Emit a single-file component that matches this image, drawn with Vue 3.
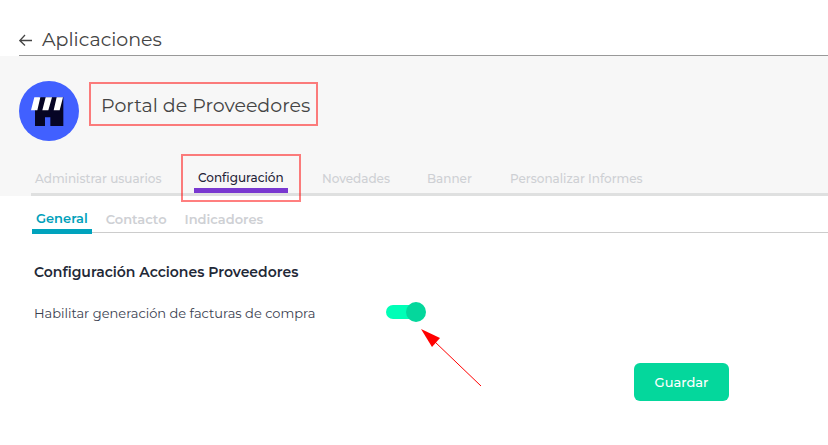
<script setup>
import { ref } from 'vue'

const tabs = ['Administrar usuarios', 'Configuración', 'Novedades', 'Banner', 'Personalizar Informes']
const sections = ['General', 'Contacto', 'Indicadores']
const activeTab = ref('Configuración')
const activeSection = ref('General')
const purchaseInvoices = ref(true)
</script>

<template>
  <div class="page">
    <header class="topbar">
      <a class="back" href="#" aria-label="Volver">
        <svg width="14" height="12" viewBox="0 0 14 12" fill="none" stroke="#444" stroke-width="1.3">
          <path d="M13 6.500H1M6 1L.8 6.500l5.200 5" />
        </svg>
      </a>
      <h1>Aplicaciones</h1>
    </header>

    <section class="hero">
      <div class="app">
        <svg class="logo" width="60" height="60" viewBox="0 0 180 180">
          <circle cx="90" cy="90" r="90" fill="#4160ff" />
          <path d="M60 49H133V135H94V109H78V135H48V88Z" fill="#060525" />
          <path d="M46 49H64L55 88H36ZM80 49H99L88 88H70ZM113 49H132L122 88H104Z" fill="#fff" />
        </svg>
        <h2 class="title">Portal de Proveedores</h2>
      </div>
      <nav class="tabs">
        <a v-for="tab in tabs" :key="tab" href="#" :class="{ active: tab === activeTab }" @click.prevent="activeTab = tab">
          <span>{{ tab }}</span>
        </a>
      </nav>
    </section>

    <nav class="sections">
      <a v-for="s in sections" :key="s" href="#" :class="{ active: s === activeSection }" @click.prevent="activeSection = s">{{ s }}</a>
    </nav>

    <main>
      <h3>Configuración Acciones Proveedores</h3>
      <div class="setting">
        <label for="invoices">Habilitar generación de facturas de compra</label>
        <div class="control">
          <input id="invoices" v-model="purchaseInvoices" type="checkbox" role="switch" />
          <svg class="pointer" width="62" height="60" viewBox="0 0 62 60">
            <path d="M14 13L61 58" stroke="#f00" stroke-width="1" fill="none" />
            <path d="M1 1L20 10L12 19Z" fill="#f00" />
          </svg>
        </div>
      </div>
      <div class="actions"><button type="button">Guardar</button></div>
    </main>
  </div>
</template>

<style>
body {
  margin: 0;
  background: #fff;
}
</style>

<style scoped>
.page {
  font-family: Montserrat, Inter, "Liberation Sans", sans-serif;
  color: #1f2937;
}
h1, h2, h3 {
  margin: 0;
  font-weight: 400;
}
a {
  color: inherit;
  text-decoration: none;
}
.topbar {
  display: flex;
  align-items: center;
  gap: 9px;
  box-sizing: border-box;
  height: 56px;
  margin-left: 19px;
  padding-top: 24px;
  border-bottom: 1px solid #999;
  color: #444;
}
.back {
  display: flex;
}
h1, h2 {
  font-size: 19px;
  line-height: 24px;
}
.hero {
  padding-top: 25px;
  background: #f7f7f7;
}
.app {
  display: flex;
  align-items: flex-start;
  gap: 10px;
  padding-left: 19px;
}
.title {
  margin-top: 1px;
  padding: 10px 6px 6px 10px;
  border: 2px solid rgba(255, 0, 0, 0.5);
  color: #444;
}
.tabs {
  display: grid;
  grid-template-columns: 163px 124px 105px 83px 1fr;
  height: 52px;
  margin-left: 31px;
  padding-left: 4px;
  border-bottom: 3px solid #dfe0e0;
  color: #ced0d4;
  font-size: 12px;
  font-weight: 500;
  line-height: 16px;
  white-space: nowrap;
}
.tabs a {
  position: relative;
  justify-self: start;
  padding-top: 30px;
}
.tabs .active {
  box-sizing: border-box;
  width: 94px;
  height: 52px;
  margin-left: -4px;
  padding-top: 29px;
  padding-left: 4px;
  border-bottom: 5px solid #7938d0;
  color: #1f2338;
}
.tabs .active::after {
  content: "";
  position: absolute;
  inset: 13px -13px -14px -13px;
  border: 2px solid rgba(255, 0, 0, 0.5);
}
.sections {
  display: flex;
  gap: 10px;
  box-sizing: border-box;
  height: 37px;
  margin-left: 32px;
  border-bottom: 1px solid #ccc;
  color: #ced0d4;
  font-size: 13px;
  font-weight: 600;
  line-height: 18px;
}
.sections a {
  height: 19px;
  padding: 14px 4px 0;
}
.sections .active {
  height: 20px;
  padding-top: 13px;
  border-bottom: 5px solid #00a3bd;
  color: #00a0ba;
}
main {
  padding: 29px 34px 0;
}
h3 {
  font-size: 14px;
  font-weight: 600;
  line-height: 20px;
}
.setting {
  display: grid;
  grid-template-columns: 352px 1fr;
  align-items: center;
  margin-top: 19px;
  color: #3a4150;
  font-size: 13px;
  line-height: 20px;
}
.setting label {
  padding-top: 2px;
}
.control {
  position: relative;
  display: flex;
}
input {
  appearance: none;
  display: flex;
  align-items: center;
  width: 40px;
  height: 20px;
  margin: 0;
  background: linear-gradient(#ccc, #ccc) center / 40px 14px no-repeat;
  border-radius: 10px;
}
input::before {
  content: "";
  width: 20px;
  height: 20px;
  border-radius: 50%;
  background: #999;
}
input:checked {
  justify-content: flex-end;
  background: none;
}
input:checked::before {
  z-index: 1;
  background: #04d79c;
}
input:checked::after {
  content: "";
  position: absolute;
  left: 0;
  width: 38px;
  height: 14px;
  border-radius: 7px;
  background: #00ffb7;
}
.pointer {
  position: absolute;
  left: 34px;
  top: 26px;
}
.actions {
  display: flex;
  justify-content: flex-end;
  padding: 40px 65px 40px 0;
}
button {
  width: 95px;
  height: 38px;
  padding: 0;
  border: 0;
  border-radius: 6px;
  background: #04d79c;
  color: #fff;
  font: 500 13px/20px Montserrat, Inter, "Liberation Sans", sans-serif;
}
</style>
